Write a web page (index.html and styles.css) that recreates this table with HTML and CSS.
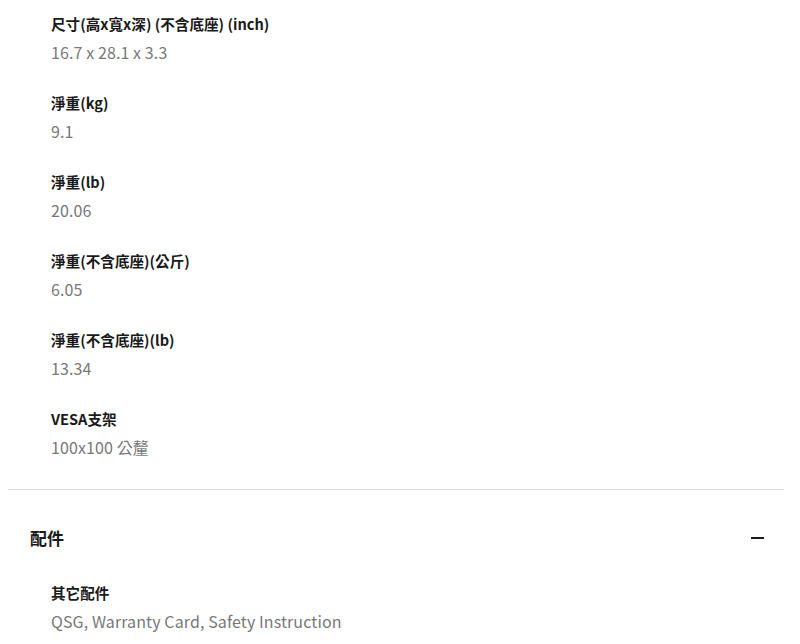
FILE: index.html
```html
<!DOCTYPE html>
<html lang="zh-Hant">
<head>
    <meta charset="UTF-8">
    <meta name="viewport" content="width=device-width, initial-scale=1.0">
    <title>規格</title>
    <link rel="stylesheet" href="styles.css">
</head>
<body>
    <div class="spec-list">
        <div class="spec-item">
            <div class="spec-label">尺寸(高x寬x深) (不含底座) (inch)</div>
            <div class="spec-value">16.7 x 28.1 x 3.3</div>
        </div>
        <div class="spec-item">
            <div class="spec-label">淨重(kg)</div>
            <div class="spec-value">9.1</div>
        </div>
        <div class="spec-item">
            <div class="spec-label">淨重(lb)</div>
            <div class="spec-value">20.06</div>
        </div>
        <div class="spec-item">
            <div class="spec-label">淨重(不含底座)(公斤)</div>
            <div class="spec-value">6.05</div>
        </div>
        <div class="spec-item">
            <div class="spec-label">淨重(不含底座)(lb)</div>
            <div class="spec-value">13.34</div>
        </div>
        <div class="spec-item">
            <div class="spec-label">VESA支架</div>
            <div class="spec-value">100x100 公釐</div>
        </div>
    </div>

    <div class="section">
        <div class="section-head">
            <h2>配件</h2>
            <span class="toggle"></span>
        </div>
        <div class="spec-list">
            <div class="spec-item">
                <div class="spec-label">其它配件</div>
                <div class="spec-value">QSG, Warranty Card, Safety Instruction</div>
            </div>
        </div>
    </div>
</body>
</html>
```

FILE: styles.css
```css
body {
    margin: 0;
    padding: 12px 16px 0 8px;
    font-family: "Noto Sans CJK TC", "Noto Sans", sans-serif;
    background: #fff;
    color: #1a1a1a;
}
.spec-list {
    padding-left: 43px;
}
.spec-item {
    padding-bottom: 27px;
}
.spec-label {
    font-size: 14.6px;
    font-weight: 700;
    line-height: 24px;
}
.spec-value {
    font-size: 16px;
    line-height: 24px;
    margin-top: 4px;
    color: #787878;
    letter-spacing: 0.1px;
}
.section {
    border-top: 1px solid #dcdcdc;
    margin-top: 3px;
}
.section-head {
    display: flex;
    align-items: center;
    justify-content: space-between;
    padding: 36px 20px 0 22px;
    height: 24px;
    margin-bottom: 31px;
}
.section-head h2 {
    margin: 0;
    font-size: 17px;
    font-weight: 700;
    line-height: 24px;
}
.toggle {
    width: 13px;
    height: 2px;
    background: #1a1a1a;
}
```
